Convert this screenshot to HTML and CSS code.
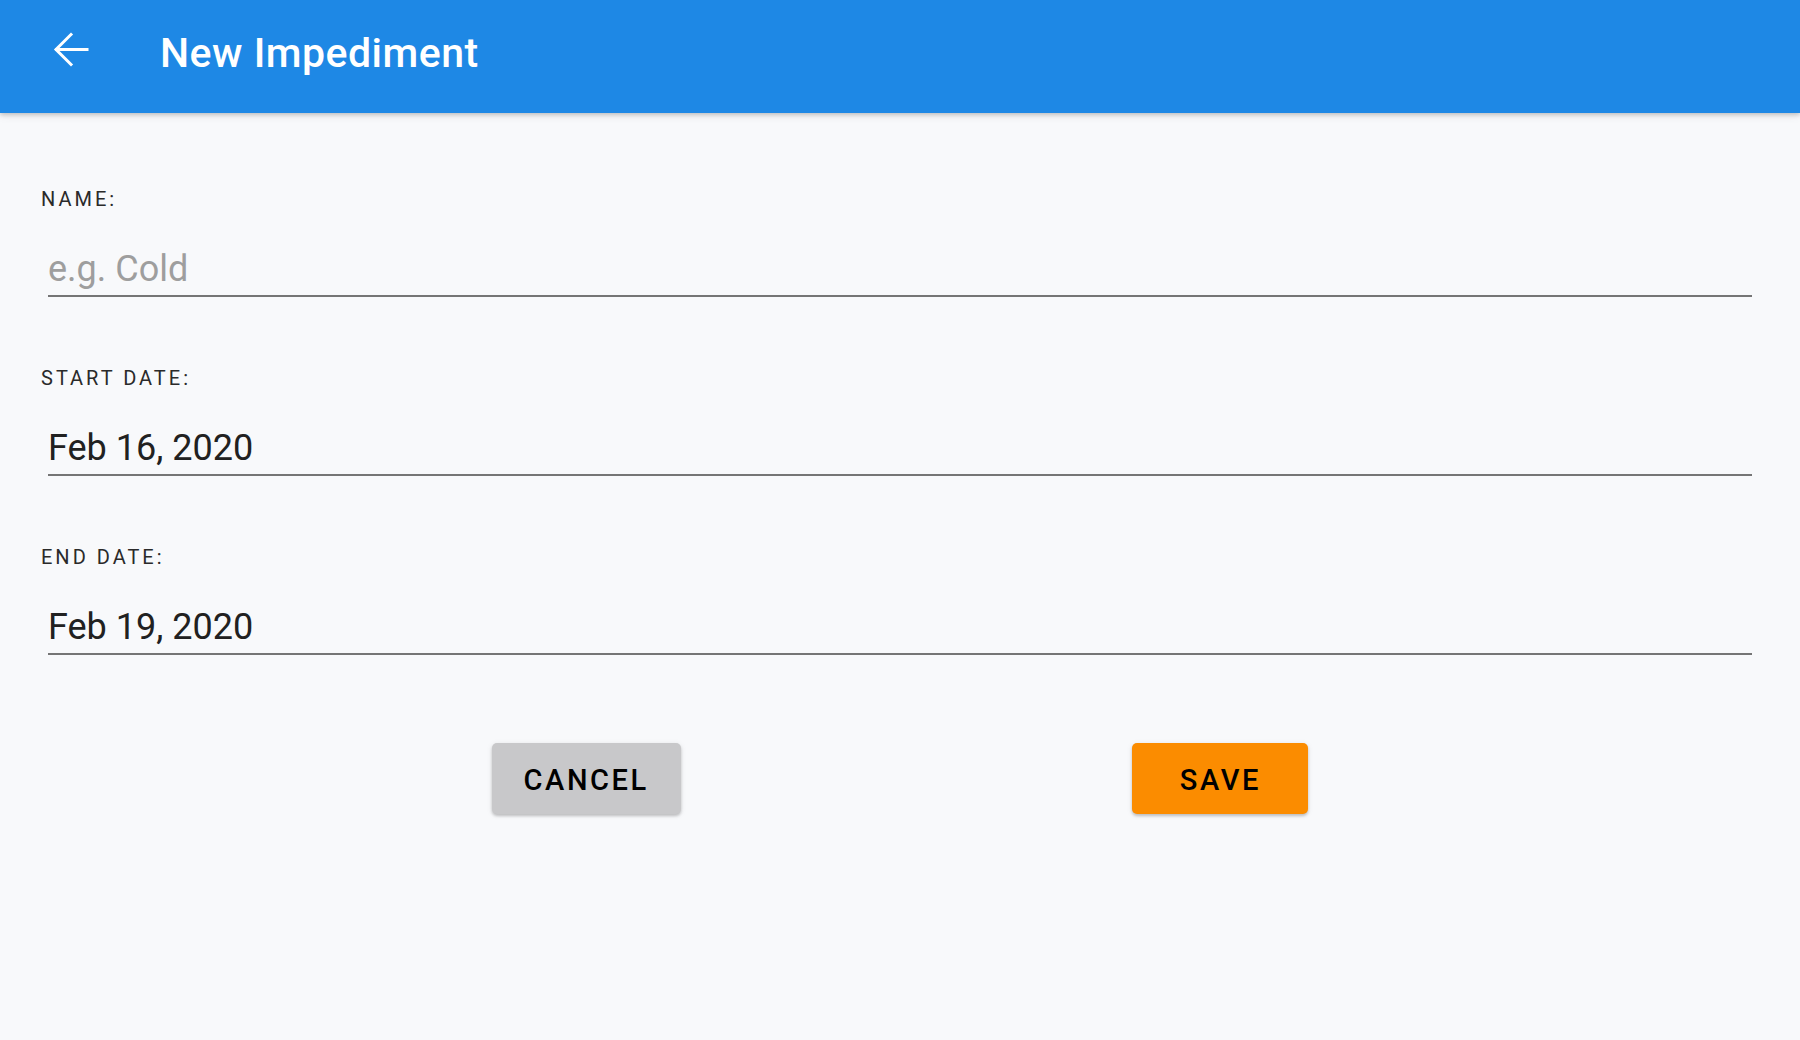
FILE: index.html
```html
<!DOCTYPE html>
<html lang="en">
<head>
<meta charset="utf-8">
<title>New Impediment</title>
<link rel="stylesheet" href="styles.css">
</head>
<body>
<header class="appbar">
  <button class="back" aria-label="Back">
    <svg viewBox="0 0 48 48" width="48" height="48" aria-hidden="true">
      <path d="M40 24.5H9.5M24 9.5L9 24.5L24 39.5" fill="none" stroke="#fff" stroke-width="3" stroke-linecap="square"/>
    </svg>
  </button>
  <h1 class="title">New Impediment</h1>
</header>
<main class="form">
  <div class="field">
    <label class="label">NAME:</label>
    <div class="input placeholder">e.g. Cold</div>
  </div>
  <div class="field">
    <label class="label">START DATE:</label>
    <div class="input">Feb 16, 2020</div>
  </div>
  <div class="field">
    <label class="label">END DATE:</label>
    <div class="input">Feb 19, 2020</div>
  </div>
  <div class="actions">
    <button class="btn btn-cancel">CANCEL</button>
    <button class="btn btn-save">SAVE</button>
  </div>
</main>
</body>
</html>
```
FILE: styles.css
```css
html, body {
  margin: 0;
  padding: 0;
}
body {
  background: #f8f9fb;
  font-family: Roboto, "Liberation Sans", sans-serif;
  width: 1800px;
  height: 1040px;
  overflow: hidden;
}
.appbar {
  height: 113px;
  background: #1e88e5;
  display: flex;
  align-items: center;
  box-shadow: 0 2px 4px rgba(0,0,0,0.18), 0 4px 8px rgba(0,0,0,0.06);
  position: relative;
  z-index: 1;
}
.back {
  margin-left: 47px;
  margin-top: -16px;
  width: 48px;
  height: 48px;
  padding: 0;
  border: 0;
  background: none;
  display: flex;
}
.title {
  margin: 0 0 0 65px;
  margin-top: -8px;
  color: #fff;
  font-size: 41px;
  font-weight: 500;
  letter-spacing: 0.5px;
}
.form {
  padding: 74px 40px 0;
  display: flex;
  flex-direction: column;
}
.field {
  display: flex;
  flex-direction: column;
  margin-bottom: 69px;
}
.label {
  font-size: 20px;
  line-height: 24px;
  letter-spacing: 3px;
  color: #2a2a2a;
  padding-left: 1px;
}
.input {
  margin: 36px 8px 0;
  font-size: 36px;
  line-height: 44px;
  padding-bottom: 4px;
  border-bottom: 2px solid #757575;
  color: #212121;
}
.input.placeholder {
  color: #9e9e9e;
}
.actions {
  margin-top: 19px;
  display: flex;
  justify-content: space-evenly;
}
.btn {
  height: 71px;
  min-width: 176px;
  padding: 0 32px;
  border: 0;
  border-radius: 5px;
  font-family: Roboto, "Liberation Sans", sans-serif;
  font-size: 29px;
  font-weight: 500;
  letter-spacing: 2.6px;
  padding-top: 3px;
  color: #000;
  box-shadow: 0 2px 3px rgba(0,0,0,0.2), 0 1px 6px rgba(0,0,0,0.08);
}
.btn-cancel {
  background: #c8c8ca;
}
.btn-save {
  background: #fb8c00;
}
```
